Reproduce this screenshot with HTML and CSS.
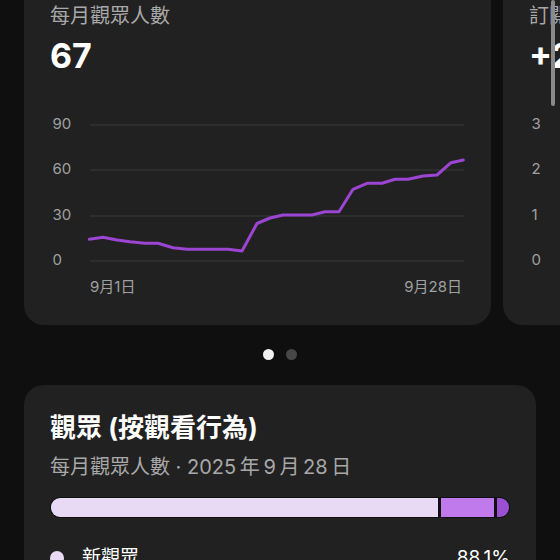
FILE: index.html
```html
<!DOCTYPE html>
<html lang="zh-Hant">
<head>
    <meta charset="UTF-8">
    <meta name="viewport" content="width=device-width, initial-scale=1.0">
    <title>觀眾分析</title>
    <link rel="stylesheet" href="styles.css">
</head>
<body>
    <div class="carousel">
        <div class="card stat-card">
            <div class="stat-title">每月觀眾人數</div>
            <div class="stat-value">67</div>
            <svg class="chart" width="440" height="190" viewBox="0 0 440 190">
                <g class="grid">
                    <line x1="40" y1="15" x2="414" y2="15"/>
                    <line x1="40" y1="60" x2="414" y2="60"/>
                    <line x1="40" y1="106" x2="414" y2="106"/>
                    <line x1="40" y1="151" x2="414" y2="151"/>
                </g>
                <g class="axis">
                    <text x="2.5" y="15">90</text>
                    <text x="2.5" y="60">60</text>
                    <text x="2.5" y="106">30</text>
                    <text x="2.5" y="151">0</text>
                    <text x="40" y="178">9月1日</text>
                    <text x="412" y="178" text-anchor="end">9月28日</text>
                </g>
                <polyline class="trend" points="39.3,129.3 53,127.3 67,130 80,131.7 95,133.3 108,133.3 123,137.7 137,139.3 178,139.3 192,141 207,113.5 220,108 233,105 262,105 275,101.7 289,101.7 303,79.3 317,73.3 332,73.3 345,69.3 358,69.3 373,66 387,65 401,52.7 413.3,50"/>
            </svg>
        </div>

        <div class="card stat-card">
            <div class="stat-title">訂閱人數</div>
            <div class="stat-value">+2</div>
            <svg class="chart" width="440" height="190" viewBox="0 0 440 190">
                <g class="grid">
                    <line x1="40" y1="15" x2="414" y2="15"/>
                    <line x1="40" y1="60" x2="414" y2="60"/>
                    <line x1="40" y1="106" x2="414" y2="106"/>
                    <line x1="40" y1="151" x2="414" y2="151"/>
                </g>
                <g class="axis">
                    <text x="2.5" y="15">3</text>
                    <text x="2.5" y="60">2</text>
                    <text x="2.5" y="106">1</text>
                    <text x="2.5" y="151">0</text>
                </g>
            </svg>
        </div>
    </div>

    <div class="scroll-thumb"></div>

    <div class="dots">
        <span class="dot active"></span>
        <span class="dot"></span>
    </div>

    <div class="card audience">
        <h2>觀眾 (按觀看行為)</h2>
        <p class="sub">每月觀眾人數 · 2025&#8201;年&#8201;9&#8201;月&#8201;28&#8201;日</p>

        <div class="bar">
            <span class="seg new" style="flex-grow: 389"></span>
            <span class="seg casual" style="flex-grow: 53"></span>
            <span class="seg regular" style="flex-grow: 12.5"></span>
        </div>

        <div class="legend-row">
            <span class="legend-dot new"></span>
            <span class="legend-label">新觀眾</span>
            <span class="legend-value">88.1%</span>
        </div>
    </div>
</body>
</html>
```

FILE: styles.css
```css
body {
    margin: 0;
    background-color: #0f0f0f;
    font-family: Inter, "Noto Sans CJK TC", sans-serif;
    color: #fff;
    overflow: hidden;
    height: 560px;
}
.card {
    background-color: #212121;
    border-radius: 20px;
}
.carousel {
    display: flex;
    gap: 12px;
    padding-left: 24px;
    margin-top: -22px;
    overflow: hidden;
}
.stat-card {
    flex-shrink: 0;
    width: 467px;
    box-sizing: border-box;
    padding: 24px 26px 25px;
}
.stat-title {
    font-size: 20px;
    line-height: 28px;
    color: #a8a8a8;
}
.stat-value {
    margin-top: 6px;
    font-size: 34px;
    line-height: 40px;
    font-weight: 700;
}
.chart {
    display: block;
    margin-top: 34px;
}
.grid line { stroke: #3a3a3a; stroke-width: 1; }
.axis text {
    fill: #a0a0a0;
    font-size: 15px;
    dominant-baseline: middle;
}
.trend {
    fill: none;
    stroke: #9b45d2;
    stroke-width: 3;
    stroke-linejoin: round;
    stroke-linecap: round;
}
.scroll-thumb {
    position: absolute;
    top: 0;
    right: 5px;
    width: 4px;
    height: 106px;
    border-radius: 2px;
    background-color: #8a8a8a;
}
.dots {
    display: flex;
    justify-content: center;
    gap: 12px;
    margin-top: 24px;
}
.dot {
    width: 11px;
    height: 11px;
    border-radius: 50%;
    background-color: #474747;
}
.dot.active { background-color: #f2f2f2; }
.audience {
    margin: 25px 24px 0;
    padding: 28px 26px 20px;
}
.audience h2 {
    margin: 0;
    font-size: 26px;
    line-height: 30px;
    font-weight: 700;
}
.sub {
    margin: 10px 0 0;
    font-size: 20px;
    line-height: 28px;
    color: #a8a8a8;
}
.bar {
    display: flex;
    gap: 3px;
    height: 19px;
    margin-top: 16px;
    border-radius: 10px;
    overflow: hidden;
    background-color: #101010;
    border: 1px solid #101010;
}
.seg { display: block; }
.new { background-color: #e8daf4; }
.casual { background-color: #c07aec; }
.regular { background-color: #9b50d2; }
.legend-row {
    display: flex;
    align-items: center;
    margin-top: 26px;
    font-size: 19px;
    line-height: 28px;
}
.legend-dot {
    width: 14px;
    height: 14px;
    border-radius: 50%;
    margin-right: 18px;
}
.legend-label { flex: 1; }
```
